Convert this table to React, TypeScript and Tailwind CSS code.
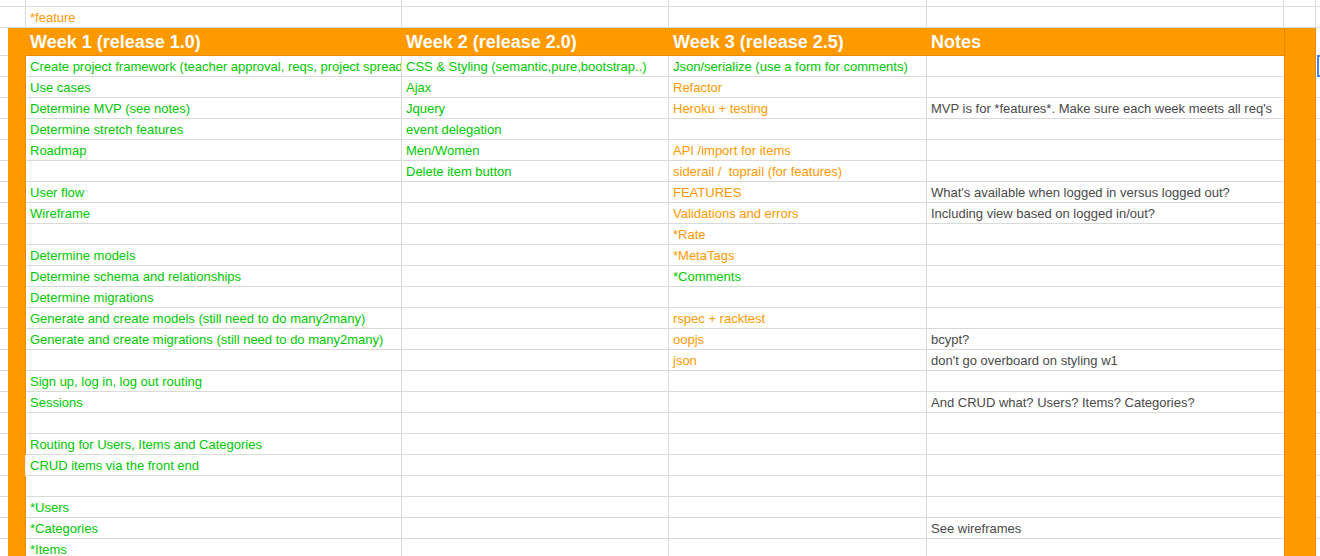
type Tone = "g" | "o" | "n";
type Cell = [string, Tone] | null;

const tone: Record<Tone, string> = {
  g: "text-[#00c800]",
  o: "text-[#ff9900]",
  n: "text-[#4a4a4a]",
};

const rows: { cells: Cell[]; soft?: boolean }[] = [
  { cells: [["Create project framework (teacher approval, reqs, project spread", "g"], ["CSS & Styling (semantic,pure,bootstrap..)", "g"], ["Json/serialize (use a form for comments)", "g"], null] },
  { cells: [["Use cases", "g"], ["Ajax", "g"], ["Refactor", "o"], null] },
  { cells: [["Determine MVP (see notes)", "g"], ["Jquery", "g"], ["Heroku + testing", "o"], ["MVP is for *features*. Make sure each week meets all req's", "n"]] },
  { cells: [["Determine stretch features", "g"], ["event delegation", "g"], null, null] },
  { cells: [["Roadmap", "g"], ["Men/Women", "g"], ["API /import for items", "o"], null] },
  { cells: [null, ["Delete item button", "g"], ["siderail /\u00a0 toprail (for features)", "o"], null] },
  { cells: [["User flow", "g"], null, ["FEATURES", "o"], ["What's available when logged in versus logged out?", "n"]] },
  { cells: [["Wireframe", "g"], null, ["Validations and errors", "o"], ["Including view based on logged in/out?", "n"]] },
  { cells: [null, null, ["*Rate", "o"], null] },
  { cells: [["Determine models", "g"], null, ["*MetaTags", "o"], null] },
  { cells: [["Determine schema and relationships", "g"], null, ["*Comments", "g"], null] },
  { cells: [["Determine migrations", "g"], null, null, null] },
  { cells: [["Generate and create models (still need to do many2many)", "g"], null, ["rspec + racktest", "o"], null] },
  { cells: [["Generate and create migrations (still need to do many2many)", "g"], null, ["oopjs", "o"], ["bcypt?", "n"]] },
  { cells: [null, null, ["json", "o"], ["don't go overboard on styling w1", "n"]] },
  { cells: [["Sign up, log in, log out routing", "g"], null, null, null] },
  { cells: [["Sessions", "g"], null, null, ["And CRUD what? Users? Items? Categories?", "n"]] },
  { cells: [null, null, null, null] },
  { cells: [["Routing for Users, Items and Categories", "g"], null, null, null] },
  { cells: [["CRUD items via the front end", "g"], null, null, null], soft: true },
  { cells: [null, null, null, null] },
  { cells: [["*Users", "g"], null, null, null] },
  { cells: [["*Categories", "g"], null, null, ["See wireframes", "n"]] },
  { cells: [["*Items", "g"], null, null, null] },
];

const widths = ["w-[376px]", "w-[267px]", "w-[258px]", "w-[357px]"];

const DataRow = ({ cells, soft }: { cells: Cell[]; soft?: boolean }) => (
  <div className="flex h-[21px] shrink-0">
    <div className="w-[8px] shrink-0 border-b border-[#dadada]" />
    <div className={`w-[18px] shrink-0 bg-[#ff9900] border-r ${soft ? "border-[#eeeeee]" : "border-[#e68a00]"}`} />
    {cells.map((c, i) => (
      <div
        key={i}
        className={`${widths[i]} shrink-0 overflow-hidden whitespace-nowrap border-b border-[#dadada] pl-[4px] pt-[1px] leading-[19px] text-[13px] ${i < 3 ? "border-r" : ""} ${c ? tone[c[1]] : ""}`}
      >
        {c ? c[0] : ""}
      </div>
    ))}
    <div className="w-[32px] shrink-0 bg-[#ff9900] border-x border-[#e68a00]" />
    <div className="flex-1 border-b border-[#dadada]" />
  </div>
);

const BlankRow = ({ h, children }: { h: string; children?: React.ReactNode }) => (
  <div className={`flex ${h} shrink-0`}>
    <div className="w-[26px] shrink-0 border-b border-r border-[#dadada]" />
    <div className="w-[376px] shrink-0 border-b border-r border-[#dadada] pl-[4px] pt-[1px] leading-[19px] text-[13px] text-[#ff9900]">
      {children}
    </div>
    <div className="w-[267px] shrink-0 border-b border-r border-[#dadada]" />
    <div className="w-[258px] shrink-0 border-b border-r border-[#dadada]" />
    <div className="w-[357px] shrink-0 border-b border-r border-[#dadada]" />
    <div className="w-[32px] shrink-0 border-b border-r border-[#dadada]" />
    <div className="flex-1 border-b border-[#dadada]" />
  </div>
);

export default function App() {
  const heads = ["Week 1 (release 1.0)", "Week 2 (release 2.0)", "Week 3 (release 2.5)", "Notes"];
  return (
    <div className="relative flex h-[556px] w-full flex-col overflow-hidden bg-white font-['Liberation_Sans',Arial,sans-serif]">
      <BlankRow h="h-[7px]" />
      <BlankRow h="h-[21px]">*feature</BlankRow>
      <div className="flex h-[28px] shrink-0">
        <div className="w-[8px] shrink-0 border-b border-[#dadada]" />
        <div className="w-[18px] shrink-0 bg-[#ff9900]" />
        {heads.map((h, i) => (
          <div
            key={h}
            className={`${widths[i]} shrink-0 bg-[#ff9900] border-b border-[#e68a00] pl-[4px] pt-[1px] leading-[26px] text-[18px] font-bold text-white whitespace-nowrap`}
          >
            {h}
          </div>
        ))}
        <div className="w-[32px] shrink-0 bg-[#ff9900] border-x border-[#e68a00]" />
        <div className="flex-1 border-b border-[#dadada]" />
      </div>
      {rows.map((r, i) => (
        <DataRow key={i} cells={r.cells} soft={r.soft} />
      ))}
      <div className="absolute left-[1317px] top-[55px] h-[22px] w-[12px] border-2 border-[#4285f4]" />
    </div>
  );
}
